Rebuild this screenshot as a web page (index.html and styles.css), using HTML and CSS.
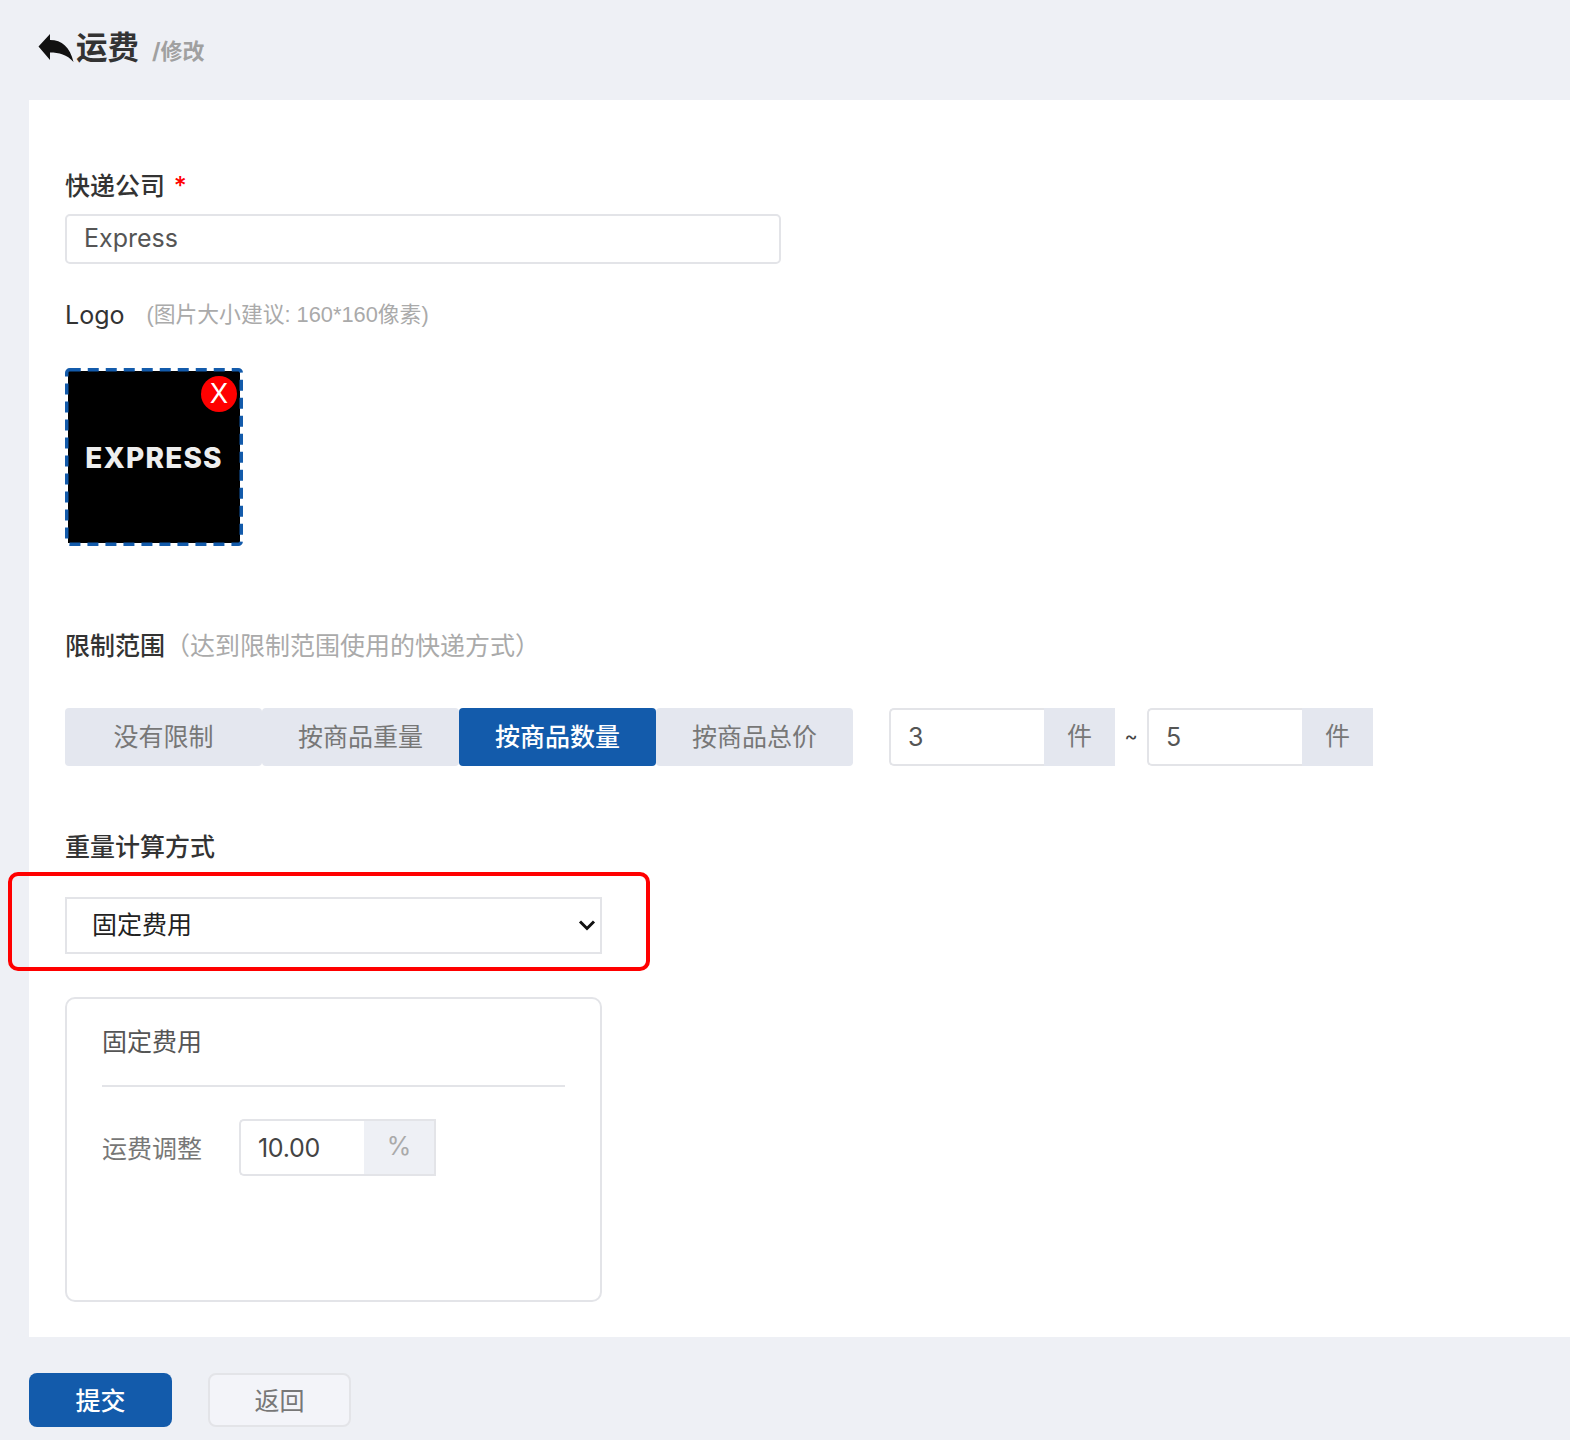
FILE: index.html
```html
<!DOCTYPE html>
<html lang="zh-CN">
<head>
<meta charset="utf-8">
<title>运费</title>
<link rel="stylesheet" href="styles.css">
</head>
<body>
<header class="page-head">
  <svg class="back-icon" viewBox="0 0 36 30" aria-hidden="true"><path d="M0.5 13.5L12 1v6C24 7 32 14 35.5 29 29 21.5 21 19.5 12 19.5V27z"/></svg>
  <h1 class="page-title">运费</h1>
  <span class="page-sub">/修改</span>
</header>
<main class="panel">
  <section class="field-company">
    <label class="label">快递公司 <span class="required">*</span></label>
    <input class="text-input" type="text" value="Express">
  </section>
  <section class="field-logo">
    <div class="logo-label"><span class="label-latin">Logo</span><span class="hint">(图片大小建议: 160*160像素)</span></div>
    <div class="logo-box">
      <span class="logo-word">EXPRESS</span>
      <svg class="logo-dash" viewBox="0 0 178 178" aria-hidden="true"><rect x="1.75" y="1.75" width="174.5" height="174.5" rx="3" fill="none" stroke="#135bab" stroke-width="3.5" stroke-dasharray="11 7"/></svg>
      <span class="logo-remove">X</span>
    </div>
  </section>
  <section class="field-range">
    <div class="range-label"><span class="label">限制范围</span><span class="hint hint-lg">（达到限制范围使用的快递方式）</span></div>
    <div class="range-row">
      <div class="tabs">
        <button class="tab">没有限制</button>
        <button class="tab">按商品重量</button>
        <button class="tab tab-active">按商品数量</button>
        <button class="tab">按商品总价</button>
      </div>
      <div class="range-inputs">
        <div class="group"><input class="group-input" type="text" value="3"><span class="addon">件</span></div>
        <span class="tilde">~</span>
        <div class="group"><input class="group-input" type="text" value="5"><span class="addon">件</span></div>
      </div>
    </div>
  </section>
  <section class="field-method">
    <div class="label method-label">重量计算方式</div>
    <div class="select-wrap">
      <select class="select"><option>固定费用</option></select>
      <svg class="chevron" viewBox="0 0 18 12" aria-hidden="true"><path d="M2 2.5l7 7 7-7" fill="none" stroke="#111" stroke-width="3"/></svg>
      <div class="highlight"></div>
    </div>
  </section>
  <section class="card">
    <div class="card-title">固定费用</div>
    <div class="card-row">
      <span class="card-label">运费调整</span>
      <div class="pct-group"><input class="pct-input" type="text" value="10.00"><span class="pct-addon">%</span></div>
    </div>
  </section>
</main>
<footer class="actions">
  <button class="btn btn-primary">提交</button>
  <button class="btn btn-default">返回</button>
</footer>
</body>
</html>
```
FILE: styles.css
```css
* { box-sizing: border-box; }
html, body { margin: 0; height: 100%; }
body {
  background: #eef0f5;
  color: #333;
  font-family: "Inter", "Noto Sans CJK SC", sans-serif;
  font-size: 25px;
  overflow: hidden;
}
input, select, button { font: inherit; margin: 0; outline: none; }

.page-head {
  height: 100px;
  padding: 26px 0 0 38px;
  display: flex;
  align-items: flex-start;
}
.back-icon { width: 36px; height: 30px; margin-top: 7px; fill: #111; flex: none; }
.page-title { margin: 0 0 0 2px; font-size: 31.5px; line-height: 44px; font-weight: 700; color: #333; }
.page-sub { margin: 10px 0 0 13px; font-size: 22px; line-height: 30px; font-weight: 700; color: #a0a0a0; }

.panel {
  margin-left: 29px;
  height: 1237px;
  background: #fff;
  padding: 69px 0 0 36px;
}
.label { color: #333; line-height: 34px; font-weight: 500; }
.label-latin { color: #333; line-height: 34px; }
.required { color: #f00; margin-left: 2px; }
.text-input {
  display: block;
  width: 716px;
  height: 50px;
  margin-top: 11px;
  padding: 0 17px 2px;
  border: 2px solid #e3e4e8;
  border-radius: 5px;
  color: #555;
  background: #fff;
}

.field-logo { margin-top: 34px; }
.logo-label { display: flex; align-items: center; height: 34px; }
.hint {
  color: #aaa;
  font-family: "Liberation Sans", "Noto Sans CJK SC", sans-serif;
  font-size: 21.8px;
  margin-left: 22px;
  padding-bottom: 5px;
}
.hint-lg { font-size: 25px; margin-left: 0; padding-bottom: 4px; }
.logo-box {
  position: relative;
  margin-top: 36px;
  width: 178px;
  height: 178px;
  padding: 3px;
  background: #000 content-box;
  display: flex;
  align-items: center;
  justify-content: center;
}
.logo-dash { position: absolute; inset: 0; width: 178px; height: 178px; }
.logo-word { color: #eee; font-size: 28px; font-weight: 800; line-height: 1; letter-spacing: 1.2px; padding-top: 2px; }
.logo-remove {
  position: absolute;
  top: 8px;
  right: 6px;
  width: 36px;
  height: 36px;
  border-radius: 50%;
  background: #f00;
  color: #fff;
  font-size: 27px;
  line-height: 36px;
  text-align: center;
}

.field-range { margin-top: 83px; }
.range-label { display: flex; align-items: center; height: 34px; }
.range-row { display: flex; margin-top: 45px; }
.tabs { display: flex; }
.tab {
  width: 197px;
  height: 58px;
  padding: 0 0 5px;
  border: 0;
  border-radius: 4px;
  background: #e4e7ef;
  color: #777;
}
.tab-active { background: #135bab; color: #fff; font-weight: 500; }
.range-inputs { display: flex; align-items: center; margin-left: 36px; }
.group { display: flex; height: 58px; width: 226px; }
.group-input {
  flex: none;
  width: 155px;
  padding: 0 17px;
  border: 2px solid #e3e4e8;
  border-right: 0;
  border-radius: 5px 0 0 5px;
  color: #555;
}
.addon {
  flex: 1;
  background: #e4e7ef;
  color: #777;
  display: flex;
  align-items: center;
  justify-content: center;
  padding-bottom: 6px;
}
.tilde { width: 32px; text-align: center; font-size: 20px; color: #444; padding-bottom: 2px; }

.field-method { margin-top: 64px; }
.method-label { height: 34px; }
.select-wrap { position: relative; width: 537px; height: 57px; margin-top: 33px; }
.select {
  display: block;
  width: 100%;
  height: 100%;
  padding: 0 0 2px 25px;
  appearance: none;
  border: 2px solid #e3e4e8;
  border-radius: 0;
  background: #fff;
  color: #222;
}
.chevron { position: absolute; right: 6px; top: 22px; width: 18px; height: 12px; pointer-events: none; }
.highlight {
  position: absolute;
  left: -57px;
  top: -25px;
  width: 642px;
  height: 99px;
  border: 4px solid #f00;
  border-radius: 10px;
  pointer-events: none;
}

.card {
  width: 537px;
  height: 305px;
  margin-top: 43px;
  padding: 0 35px;
  border: 2px solid #e3e4e8;
  border-radius: 10px;
}
.card-title {
  height: 88px;
  padding-top: 26px;
  line-height: 34px;
  color: #555;
  border-bottom: 2px solid #e3e4e8;
}
.card-row { display: flex; align-items: center; margin-top: 32px; }
.card-label { width: 137px; color: #777; padding-bottom: 2px; }
.pct-group { display: flex; width: 197px; height: 57px; }
.pct-input {
  width: 125px;
  padding: 0 17px;
  border: 2px solid #e3e4e8;
  border-right: 0;
  border-radius: 5px 0 0 5px;
  color: #444;
  letter-spacing: -0.3px;
}
.pct-addon {
  flex: 1;
  background: #eef0f5;
  border: 2px solid #e3e4e8;
  border-left: 0;
  color: #aaa;
  display: flex;
  align-items: center;
  justify-content: center;
  padding-bottom: 4px;
}

.actions { display: flex; gap: 36px; padding: 36px 0 0 29px; }
.btn { width: 143px; height: 54px; padding: 0 0 2px; border-radius: 8px; }
.btn-primary { background: #135bab; border: 0; color: #fff; font-weight: 500; }
.btn-default { background: #f3f4f9; border: 2px solid #e3e4e8; color: #777; }
```
